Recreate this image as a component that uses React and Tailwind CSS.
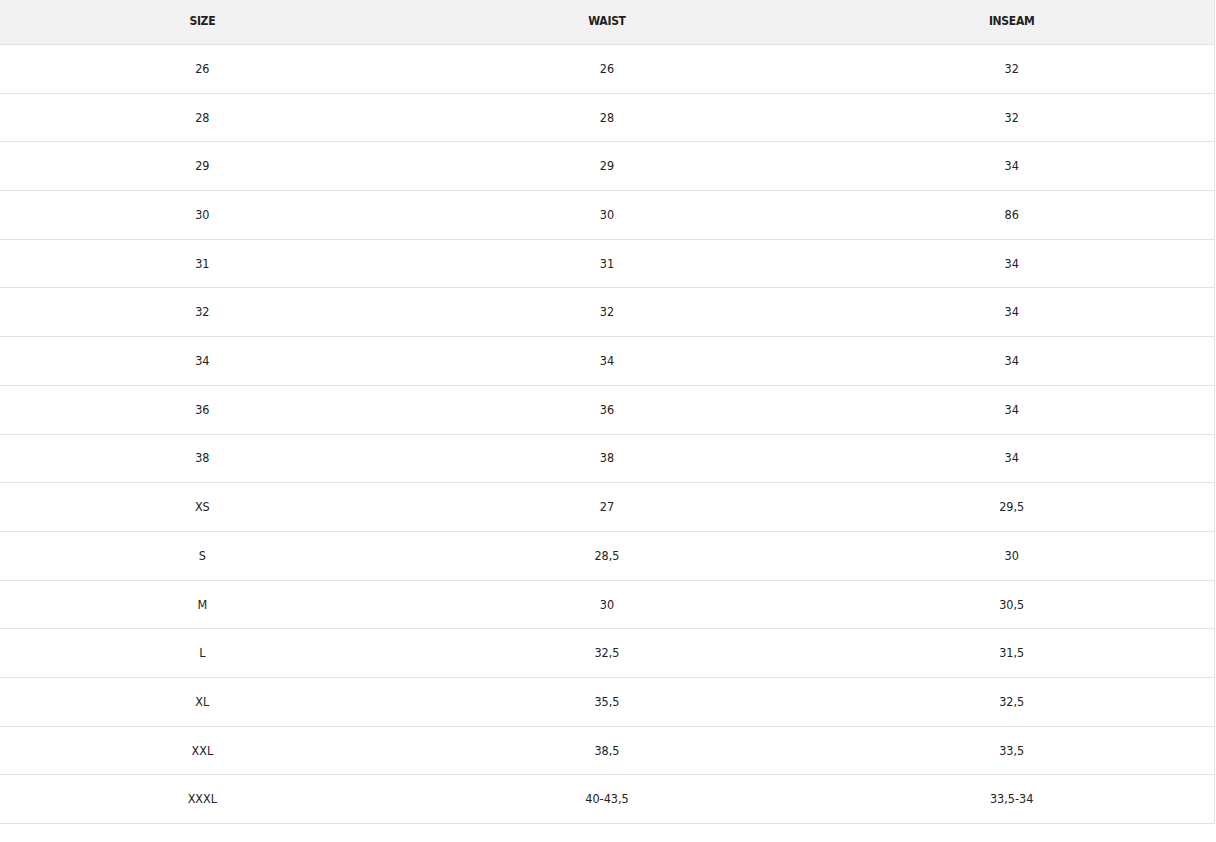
import React from "react";

const rows = [
  ["26", "26", "32"],
  ["28", "28", "32"],
  ["29", "29", "34"],
  ["30", "30", "86"],
  ["31", "31", "34"],
  ["32", "32", "34"],
  ["34", "34", "34"],
  ["36", "36", "34"],
  ["38", "38", "34"],
  ["XS", "27", "29,5"],
  ["S", "28,5", "30"],
  ["M", "30", "30,5"],
  ["L", "32,5", "31,5"],
  ["XL", "35,5", "32,5"],
  ["XXL", "38,5", "33,5"],
  ["XXXL", "40-43,5", "33,5-34"],
];

export default function App() {
  return (
    <div className="min-h-screen bg-white font-['DejaVu_Sans_Condensed','DejaVu_Sans',sans-serif] text-[#222]">
      <div className="w-[1215px] border-r border-[#e2e2e2]">
        {/* Header */}
        <div className="grid grid-cols-3 h-[45px] bg-[#f2f2f2] border-b border-[#e0e0e0] text-[12px] font-bold tracking-tight">
          <div className="flex items-center justify-center pb-[3px]">SIZE</div>
          <div className="flex items-center justify-center pb-[3px]">WAIST</div>
          <div className="flex items-center justify-center pb-[3px]">INSEAM</div>
        </div>

        {/* Rows */}
        {rows.map((r, i) => (
          <div
            key={i}
            className="grid grid-cols-3 h-[48.7px] border-b border-[#e2e2e2] text-[12.5px] font-light"
          >
            {r.map((c, j) => (
              <div key={j} className="flex items-center justify-center pt-[1px]">
                {c}
              </div>
            ))}
          </div>
        ))}
      </div>
    </div>
  );
}
